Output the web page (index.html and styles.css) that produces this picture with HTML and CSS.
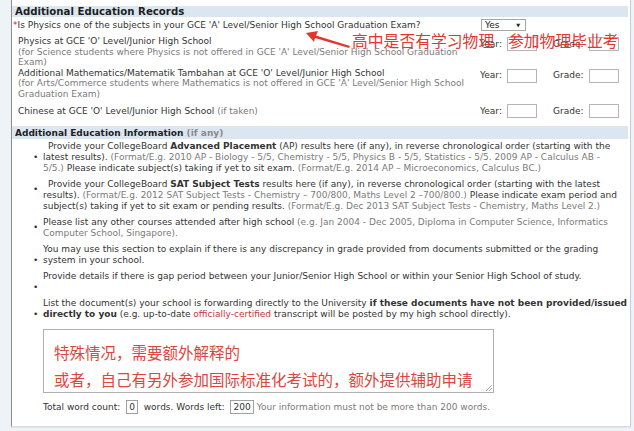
FILE: index.html
```html
<!DOCTYPE html>
<html>
<head>
<meta charset="utf-8">
<link rel="stylesheet" href="styles.css">
</head>
<body>
<div class="page">
  <div class="panel">
    <div class="sec-head sec-head-lg">Additional Education Records</div>
    <div class="records">
      <div class="row row-q">
        <div class="rtext"><span class="req">*</span>Is Physics one of the subjects in your GCE 'A' Level/Senior High School Graduation Exam?</div>
        <div class="ctrl"><span class="select">Yes<span class="caret">&#9660;</span></span></div>
      </div>
      <div class="row row-phys">
        <div class="rtext">Physics at GCE 'O' Level/Junior High School<br><span class="muted">(for Science students where Physics is not offered in GCE 'A' Level/Senior High School Graduation<br>Exam)</span></div>
        <div class="ctrl"><span class="lbl">Year:</span><span class="box"></span><span class="lbl lbl-g">Grade:</span><span class="box"></span></div>
      </div>
      <div class="row row-math">
        <div class="rtext">Additional Mathematics/Matematik Tambahan at GCE 'O' Level/Junior High School<br><span class="muted">(for Arts/Commerce students where Mathematics is not offered in GCE 'A' Level/Senior High School<br>Graduation Exam)</span></div>
        <div class="ctrl"><span class="lbl">Year:</span><span class="box"></span><span class="lbl lbl-g">Grade:</span><span class="box"></span></div>
      </div>
      <div class="row row-chin">
        <div class="rtext">Chinese at GCE 'O' Level/Junior High School <span class="muted">(if taken)</span></div>
        <div class="ctrl"><span class="lbl">Year:</span><span class="box"></span><span class="lbl lbl-g">Grade:</span><span class="box"></span></div>
      </div>
    </div>
    <div class="sec-head">Additional Education Information <span class="head-muted">(if any)</span></div>
    <ul class="info">
      <li class="item"><span class="dot dot-l2">&#8226;</span><div class="itext"><span class="ind"></span>Provide your CollegeBoard <b>Advanced Placement</b> (AP) results here (if any), in reverse chronological order (starting with the<br>latest results). <span class="muted">(Format/E.g. 2010 AP - Biology - 5/5, Chemistry - 5/5, Physics B - 5/5, Statistics - 5/5. 2009 AP - Calculus AB -<br>5/5.)</span> Please indicate subject(s) taking if yet to sit exam. <span class="muted">(Format/E.g. 2014 AP – Microeconomics, Calculus BC.)</span></div></li>
      <li class="item"><span class="dot dot-mid">&#8226;</span><div class="itext"><span class="ind"></span>Provide your CollegeBoard <b>SAT Subject Tests</b> results here (if any), in reverse chronological order (starting with the latest<br>results). <span class="muted">(Format/E.g. 2012 SAT Subject Tests - Chemistry – 700/800, Maths Level 2 –700/800.)</span> Please indicate exam period and<br>subject(s) taking if yet to sit exam or pending results. <span class="muted">(Format/E.g. Dec 2013 SAT Subject Tests - Chemistry, Maths Level 2.)</span></div></li>
      <li class="item"><span class="dot dot-mid">&#8226;</span><div class="itext">Please list any other courses attended after high school <span class="muted">(e.g. Jan 2004 - Dec 2005, Diploma in Computer Science, Informatics<br>Computer School, Singapore).</span></div></li>
      <li class="item"><span class="dot dot-l2">&#8226;</span><div class="itext">You may use this section to explain if there is any discrepancy in grade provided from documents submitted or the grading<br>system in your school.</div></li>
      <li class="item"><span class="dot dot-l2">&#8226;</span><div class="itext">Provide details if there is gap period between your Junior/Senior High School or within your Senior High School of study.<br>&nbsp;</div></li>
      <li class="item"><span class="dot dot-l2">&#8226;</span><div class="itext">List the document(s) your school is forwarding directly to the University <b>if these documents have not been provided/issued<br>directly to you</b> (e.g. up-to-date <span class="red">officially-certified</span> transcript will be posted by my high school directly).</div></li>
    </ul>
    <div class="answer">
      <div class="textarea">特殊情况，需要额外解释的<br>或者，自己有另外参加国际标准化考试的，额外提供辅助申请<span class="grip"></span></div>
      <div class="count">Total word count: <span class="num">0</span> words. Words left: <span class="num">200</span> <span class="muted">Your information must not be more than 200 words.</span></div>
    </div>
  </div>

  <svg class="arrow" width="60" height="24" viewBox="0 0 60 24">
    <polygon points="2,5 14,3 12,7.5 46,18 45,20 11,10 10,14" fill="#e3362f"/>
  </svg>
  <div class="note note1">高中是否有学习物理</div>
  <div class="note note2">参加物理毕业考</div>
</div>
</body>
</html>
```
FILE: styles.css
```css
html, body {
  margin: 0;
  padding: 0;
}
body {
  background: #eef3f8;
  font-family: "DejaVu Sans", Verdana, sans-serif;
  font-size: 9px;
  line-height: 11px;
  color: #333;
}
.page {
  position: relative;
  width: 634px;
  height: 431px;
  overflow: hidden;
}
.panel {
  margin-left: 11px;
  width: 616px;
  padding: 6px 2px 12px 0;
  background: #fff;
  border-left: 1px solid #8e8e8e;
  border-right: 1px solid #c5cfda;
  border-bottom: 1px solid #d8dde3;
  box-shadow: 0 1px 1px #e2e6ea;
}
.sec-head {
  background: #dce6f0;
  font-weight: bold;
  color: #1e1e1e;
  padding: 0 0 0 3px;
  height: 12px;
  line-height: 12px;
}
.sec-head-lg {
  font-size: 10.2px;
  height: 11px;
  line-height: 11px;
}
.head-muted {
  color: #8a8a8a;
}
.records {
  padding: 2px 0 8px 6px;
  border-bottom: 1px solid #e3e7ec;
  line-height: 10.5px;
}
.row {
  display: flex;
  align-items: flex-start;
}
.rtext {
  width: 462px;
  white-space: nowrap;
}
.req {
  color: #d22;
  margin-left: -5px;
}
.muted {
  color: #7a7a7a;
}
.ctrl {
  display: flex;
  align-items: center;
}
.row-q {
  height: 12px;
  align-items: center;
}
.select {
  display: inline-flex;
  align-items: center;
  justify-content: space-between;
  box-sizing: border-box;
  width: 45px;
  height: 12px;
  margin-left: 1px;
  padding: 0 5px 0 3px;
  border: 1px solid #a6a6a6;
  background: #fff;
  color: #222;
  line-height: 10px;
}
.caret {
  font-size: 5px;
}
.row-phys {
  margin-top: 5px;
}
.row-phys .ctrl,
.row-math .ctrl {
  margin-top: 1px;
}
.row-chin {
  margin-top: 5px;
  align-items: center;
}
.lbl {
  width: 27px;
}
.lbl-g {
  width: 36px;
  margin-left: 16px;
}
.box {
  display: inline-block;
  box-sizing: border-box;
  width: 30px;
  height: 14px;
  border: 1px solid #b5b5b5;
  background: #fff;
}
.info {
  list-style: none;
  margin: 0;
  padding: 2px 0 0 21px;
}
.item {
  display: flex;
  align-items: flex-start;
  margin-bottom: 5px;
}
.item:last-child {
  margin-bottom: 0;
}
.dot {
  width: 10px;
  font-size: 9px;
  line-height: 11px;
  color: #333;
}
.dot-l2 {
  margin-top: 11px;
}
.dot-mid {
  margin-top: 5px;
}
.itext {
  white-space: nowrap;
}
.ind {
  display: inline-block;
  width: 5px;
}
.red {
  color: #c8363b;
}
.answer {
  padding: 9px 0 0 31px;
}
.textarea {
  position: relative;
  box-sizing: border-box;
  width: 451px;
  height: 64px;
  border: 1px solid #b0b0b0;
  padding: 9px 0 0 10px;
  font-family: "Noto Sans CJK SC", sans-serif;
  font-size: 15.5px;
  line-height: 27px;
  color: #e0443c;
}
.grip {
  position: absolute;
  right: 1px;
  bottom: 1px;
  width: 6px;
  height: 6px;
  background: linear-gradient(135deg, transparent 45%, #aaa 45%, #aaa 55%, transparent 55%, transparent 72%, #aaa 72%, #aaa 80%, transparent 80%);
}
.count {
  margin-top: 7px;
  display: flex;
  align-items: center;
  white-space: pre;
  height: 14px;
}
.num {
  display: inline-block;
  box-sizing: border-box;
  height: 14px;
  line-height: 12px;
  padding: 0 2px;
  border: 1px solid #a0a0a0;
  margin: 0 3px;
}
.arrow {
  position: absolute;
  left: 304px;
  top: 28px;
}
.note {
  position: absolute;
  font-family: "Noto Sans CJK SC", sans-serif;
  color: #e3362f;
  font-size: 15.8px;
  line-height: 18px;
  white-space: nowrap;
}
.note1 {
  left: 352px;
  top: 32px;
}
.note2 {
  left: 508px;
  top: 32px;
}
```
